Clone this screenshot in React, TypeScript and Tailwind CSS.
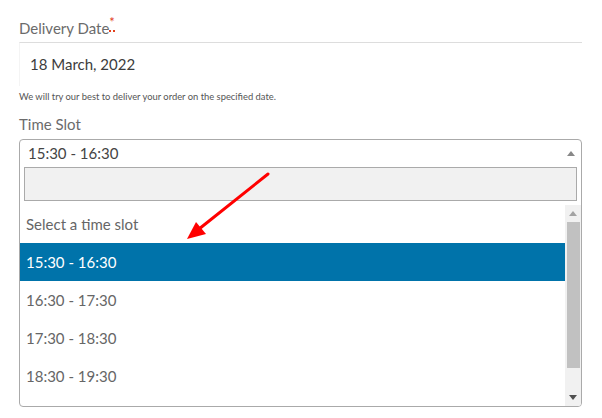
import React from "react";

const SLOTS = ["15:30 - 16:30", "16:30 - 17:30", "17:30 - 18:30", "18:30 - 19:30"];

function Caret({ up, color }: { up: boolean; color: string }) {
  return (
    <svg width="8" height="5" viewBox="0 0 8 5">
      <path d={up ? "M0 5 L4 0 L8 5 Z" : "M0 0 L4 5 L8 0 Z"} fill={color} />
    </svg>
  );
}

export default function App() {
  return (
    <div className="relative w-[602px] h-[418px] bg-white overflow-hidden" style={{ fontFamily: "Lato, 'Open Sans', sans-serif" }}>
      <div className="pt-[16px] pl-[19px] pr-[20px]">
        {/* Delivery date */}
        <div className="h-[26px] text-[15px] leading-[24px] text-[#6b6b6b]">
          Delivery Date
          <abbr className="text-[#e2401c] no-underline border-b-2 border-dotted border-[#e2401c] text-[13px] leading-none align-top">*</abbr>
        </div>
        <div className="h-[44px] border-t border-[#dddddd] border-l border-l-[#f4f4f4] flex items-center pl-[10px] text-[15px] text-[#3c3c3c]">
          18 March, 2022
        </div>
        <div className="mt-[4px] text-[9.4px] leading-[14px] text-[#555]">
          We will try our best to deliver your order on the specified date.
        </div>

        {/* Time slot */}
        <div className="mt-[9px] text-[15px] leading-[22px] text-[#6b6b6b]">Time Slot</div>
        <div className="mt-[4px] h-[268px] border border-[#aaaaaa] rounded-[4px] overflow-hidden flex flex-col">
          <div className="h-[27px] shrink-0 flex items-center justify-between pl-[8px] pr-[6px] text-[15px] text-[#444]">
            <span>15:30 - 16:30</span>
            <Caret up color="#888888" />
          </div>
          <div className="mx-[4px] h-[34px] shrink-0 bg-[#f1f1f1] border border-[#aaaaaa]" />
          <div className="mt-[4px] flex-1 flex min-h-0">
            <div className="flex-1 overflow-hidden">
              <div className="h-[38px] flex items-center pl-[6px] text-[15px] text-[#666]">Select a time slot</div>
              {SLOTS.map((s, i) => (
                <div
                  key={s}
                  className={
                    i === 0
                      ? "h-[38px] flex items-center pl-[6px] text-[15px] bg-[#0073aa] text-white"
                      : "h-[38px] flex items-center pl-[6px] text-[15px] text-[#666]"
                  }
                >
                  {s}
                </div>
              ))}
            </div>
            <div className="w-[16px] shrink-0 bg-[#f1f1f1] flex flex-col items-center">
              <div className="h-[17px] flex items-center justify-center">
                <Caret up color="#a3a3a3" />
              </div>
              <div className="w-[13px] h-[146px] bg-[#c1c1c1]" />
              <div className="flex-1" />
              <div className="h-[17px] flex items-center justify-center">
                <Caret up={false} color="#505050" />
              </div>
            </div>
          </div>
        </div>
      </div>

      {/* annotation arrow */}
      <svg className="absolute left-0 top-0 pointer-events-none" width="602" height="418">
        <line x1="268" y1="174" x2="199" y2="229" stroke="#ff0000" strokeWidth="3" strokeLinecap="round" />
        <path d="M187 239 L196 222 L206 234 Z" fill="#ff0000" />
      </svg>
    </div>
  );
}
